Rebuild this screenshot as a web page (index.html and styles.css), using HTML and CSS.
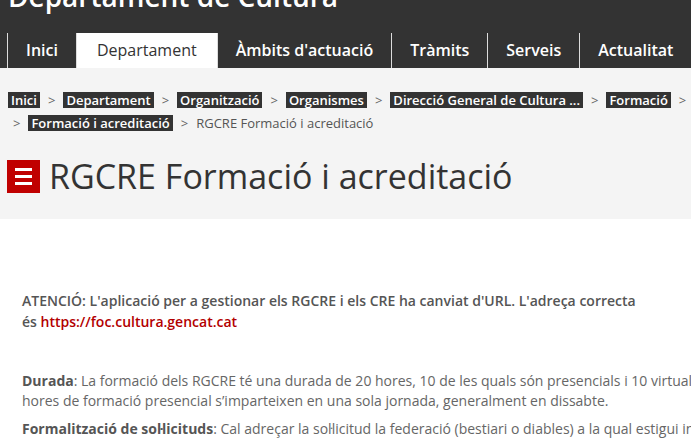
FILE: index.html
```html
<!DOCTYPE html>
<html lang="ca">
<head>
<meta charset="UTF-8" />
<meta name="viewport" content="width=device-width, initial-scale=1" />
<title>RGCRE Formació i acreditació</title>
<link rel="stylesheet" href="styles.css">
</head>
<body>

<div class="page">
  <header class="site-header">
    <div class="site-title">Departament de Cultura</div>
    <nav class="main-nav">
      <ul>
        <li><a href="#">Inici</a></li>
        <li class="active"><a href="#">Departament</a></li>
        <li><a href="#">Àmbits d'actuació</a></li>
        <li><a href="#">Tràmits</a></li>
        <li><a href="#">Serveis</a></li>
        <li><a href="#">Actualitat</a></li>
        <li><a href="#">Contacte</a></li>
      </ul>
    </nav>
  </header>

  <section class="page-head">
    <ol class="breadcrumb">
      <li><a href="#">Inici</a></li>
      <li><a href="#">Departament</a></li>
      <li><a href="#">Organització</a></li>
      <li><a href="#">Organismes</a></li>
      <li><a href="#">Direcció General de Cultura ...</a></li>
      <li><a href="#">Formació</a></li>
      <li><a href="#">Cursos</a></li>
      <li><a href="#">Formació i acreditació</a></li>
      <li class="current">RGCRE Formació i acreditació</li>
    </ol>

    <h1 class="page-title">
      <span class="menu-icon">
        <svg width="33" height="33" viewBox="0 0 33 33">
          <rect x="8" y="8" width="17" height="3" fill="#fff" />
          <rect x="8" y="15" width="17" height="3" fill="#fff" />
          <rect x="8" y="22" width="17" height="3" fill="#fff" />
        </svg>
      </span>
      RGCRE Formació i acreditació
    </h1>
  </section>

  <main class="content">
    <p class="notice">ATENCIÓ: L'aplicació per a gestionar els RGCRE i els CRE ha canviat d'URL. L'adreça correcta<br>
    és <a href="https://foc.cultura.gencat.cat">https://foc.cultura.gencat.cat</a></p>

    <p><strong>Durada</strong>: La formació dels RGCRE té una durada de 20 hores, 10 de les quals són presencials i 10 virtuals. Les 10 hores de formació presencial s’imparteixen en una sola jornada, generalment en dissabte.</p>

    <p><strong>Formalització de sol·licituds</strong>: Cal adreçar la sol·licitud la federació (bestiari o diables) a la qual estigui inscrita l'entitat.</p>
  </main>
</div>

</body>
</html>
```

FILE: styles.css
```css
html, body {
  overflow: hidden;
}
body {
  margin: 0;
  font-family: 'Open Sans', Arial, sans-serif;
  color: #555;
  background: #fff;
}
.page {
  width: 770px;
  margin-top: -19px; /* la pàgina està desplaçada cap avall */
}
a {
  text-decoration: none;
}

/* Capçalera */
.site-header {
  background: #333;
}
.site-title {
  height: 30px;
  padding-left: 8px;
  font-size: 28px;
  font-weight: 600;
  line-height: 30px;
  color: #fff;
}
.main-nav ul {
  display: flex;
  margin: 22px 0 0 7px;
  padding: 0;
  list-style: none;
  border-left: 1px solid #ddd;
  white-space: nowrap;
}
.main-nav a {
  display: block;
  padding: 0 18px;
  line-height: 35px;
  font-size: 16px;
  font-weight: 600;
  color: #fff;
  border-right: 1px solid #ddd;
}
.main-nav .active a {
  background: #fff;
  color: #333;
  font-weight: 400;
  padding: 0 20px;
}

/* Engrunes i títol */
.page-head {
  background: #f4f4f4;
  padding: 21px 0 23px;
}
.breadcrumb {
  display: flex;
  flex-wrap: wrap;
  margin: 0;
  padding: 0 0 0 8px;
  list-style: none;
  font-size: 13px;
  line-height: 23px;
}
.breadcrumb li {
  margin-right: 3px;
  white-space: nowrap;
}
.breadcrumb li + li::before {
  content: ">";
  margin: 0 8px 0 5px;
  color: #666;
}
.breadcrumb a {
  display: inline-block;
  padding: 0 3px;
  line-height: 16px;
  background: #333;
  color: #fff;
  font-weight: 600;
}
.breadcrumb .current {
  color: #555;
}
.page-title {
  display: flex;
  align-items: center;
  margin: 21px 0 0 7px;
  font-size: 34px;
  font-weight: 400;
  line-height: 40px;
  color: #333;
}
.menu-icon {
  display: flex;
  width: 33px;
  height: 33px;
  margin-right: 9px;
  background: #c00000;
}

/* Contingut */
.content {
  padding: 71px 0 0 22px;
  font-size: 14px;
  line-height: 20px;
  color: #666;
}
.content p {
  margin: 0 0 8px;
}
.content .notice {
  margin-bottom: 39px;
  line-height: 21px;
  font-weight: 600;
  color: #555;
}
.content .notice a {
  color: #b30000;
}
.content strong {
  color: #555;
}
```
